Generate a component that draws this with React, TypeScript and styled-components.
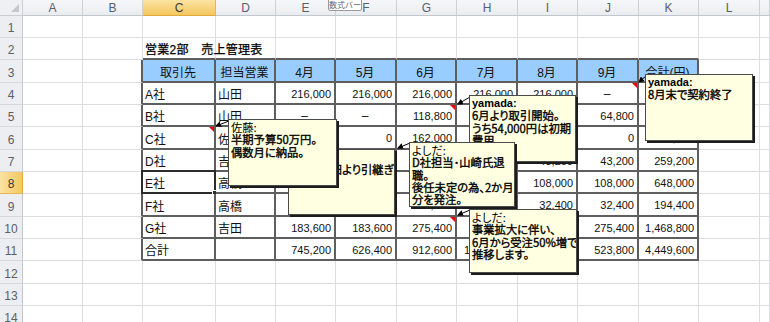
import React from "react";
import styled, { createGlobalStyle, css } from "styled-components";

const GlobalStyle = createGlobalStyle`
  html, body {
    margin: 0;
    padding: 0;
    background: #fff;
  }
  body {
    width: 770px;
    height: 322px;
    overflow: hidden;
  }
`;

// column widths: row header, A..L, rest of the window
const COLS = [23, 60, 60, 73, 60, 60, 61, 60, 61, 60, 61, 60, 61, 10];
const LETTERS = ["A", "B", "C", "D", "E", "F", "G", "H", "I", "J", "K", "L", ""];
const ROWS = [22, 22, 23, 22, 22, 23, 22, 22, 23, 22, 22, 23, 22, 22];

const SEL_ROW = 8;
const SEL_COL = 3;

// table C3:K11
const DATA: string[][] = [
  ["取引先", "担当営業", "4月", "5月", "6月", "7月", "8月", "9月", "合計(円)"],
  ["A社", "山田", "216,000", "216,000", "216,000", "216,000", "216,000", "–", "1,080,000"],
  ["B社", "山田", "–", "–", "118,800", "64,800", "64,800", "64,800", "313,200"],
  ["C社", "佐藤", "162,000", "0", "162,000", "0", "162,000", "0", "486,000"],
  ["D社", "吉田", "43,200", "43,200", "43,200", "43,200", "43,200", "43,200", "259,200"],
  ["E社", "高橋", "108,000", "108,000", "108,000", "108,000", "108,000", "108,000", "648,000"],
  ["F社", "高橋", "32,400", "32,400", "32,400", "32,400", "32,400", "32,400", "194,400"],
  ["G社", "吉田", "183,600", "183,600", "275,400", "275,400", "275,400", "275,400", "1,468,800"],
  ["合計", "", "745,200", "626,400", "912,600", "1,015,200", "1,015,200", "523,800", "4,449,600"],
];

// cells carrying a comment (row-col)
const NOTED = ["4-10", "5-7", "6-3", "7-6", "10-7"];

type Note = {
  x: number;
  y: number;
  w: number;
  h: number;
  z: number;
  author: string;
  bold?: boolean;
  text: string;
};

const NOTES: Note[] = [
  { x: 645, y: 74, w: 108, h: 67, z: 11, author: "yamada:", bold: true, text: "8月末で契約終了" },
  { x: 469, y: 95, w: 107, h: 67, z: 11, author: "yamada:", bold: true, text: "6月より取引開始。\nうち54,000円は初期\n費用" },
  { x: 288, y: 149, w: 107, h: 66, z: 11, author: "高橋:", text: "4月に吉田より引継ぎ" },
  { x: 228, y: 119, w: 109, h: 67, z: 12, author: "佐藤:", text: "半期予算50万円。\n偶数月に納品。" },
  { x: 409, y: 142, w: 106, h: 65, z: 12, author: "よしだ:", text: "D社担当･山崎氏退\n職。\n後任未定の為、2か月\n分を発注。" },
  { x: 469, y: 209, w: 108, h: 64, z: 11, author: "よしだ:", text: "事業拡大に伴い、\n6月から受注50%増で\n推移します。" },
];

// comment connector lines: box corner -> cell corner
const ARROWS = [
  [646, 76, 639, 82],
  [470, 97, 458, 104],
  [229, 121, 216, 126],
  [410, 143, 398, 148],
  [470, 210, 458, 215],
];

const Sheet = styled.div`
  position: relative;
  display: grid;
  grid-template-columns: ${COLS.map((w) => `${w}px`).join(" ")};
  grid-template-rows: 16px ${ROWS.map((h) => `${h}px`).join(" ")};
  width: 770px;
  height: 322px;
  overflow: hidden;
  background: #fff;
  font-family: "Liberation Sans", "Noto Sans CJK JP", sans-serif;
`;

const Corner = styled.div`
  position: relative;
  box-sizing: border-box;
  background: #eef0f3;
  border-right: 1px solid #c9cdd3;
  border-bottom: 1px solid #c9cdd3;

  &::after {
    content: "";
    position: absolute;
    right: 3px;
    bottom: 3px;
    border-left: 8px solid transparent;
    border-bottom: 8px solid #c4c8cd;
  }
`;

const ColHead = styled.div<{ $sel?: boolean }>`
  box-sizing: border-box;
  display: flex;
  align-items: center;
  justify-content: center;
  padding-top: 1px;
  font-size: 12px;
  color: ${(p) => (p.$sel ? "#3a3a3a" : "#5a6068")};
  background: ${(p) =>
    p.$sel
      ? "linear-gradient(#fbe3a2, #f4c75f)"
      : "linear-gradient(#f6f7f9, #eaedf0)"};
  border-right: 1px solid ${(p) => (p.$sel ? "#e7b556" : "#cdd1d6")};
  border-bottom: 1px solid ${(p) => (p.$sel ? "#e2a93d" : "#c2c7ce")};
`;

const RowHead = styled.div<{ $sel?: boolean }>`
  box-sizing: border-box;
  display: flex;
  align-items: flex-end;
  justify-content: center;
  padding-bottom: 2px;
  font-size: 12px;
  color: ${(p) => (p.$sel ? "#3a3a3a" : "#5a6068")};
  background: ${(p) =>
    p.$sel ? "linear-gradient(90deg, #fbe3a2, #f4c75f)" : "#eceef1"};
  border-right: 1px solid ${(p) => (p.$sel ? "#e2a93d" : "#c2c7ce")};
  border-bottom: 1px solid ${(p) => (p.$sel ? "#e7b556" : "#d5d9de")};
`;

type Align = "left" | "center" | "right";

const Cell = styled.div<{
  $rb: boolean;
  $bb: boolean;
  $align: Align;
  $head?: boolean;
  $table?: boolean;
  $num?: boolean;
  $sel?: boolean;
  $note?: boolean;
}>`
  position: relative;
  box-sizing: border-box;
  display: flex;
  align-items: center;
  justify-content: ${(p) =>
    p.$align === "left" ? "flex-start" : p.$align === "right" ? "flex-end" : "center"};
  padding: 1px 3px 0 2px;
  font-size: ${(p) => (p.$num ? "11px" : "12px")};
  color: #111;
  white-space: nowrap;
  background: ${(p) => (p.$head ? "#99ccff" : p.$table ? "#fff" : "transparent")};
  border-right: ${(p) => (p.$rb ? "2px solid #5e5e5e" : "1px solid #dcdee1")};
  border-bottom: ${(p) => (p.$bb ? "2px solid #5e5e5e" : "1px solid #dcdee1")};

  ${(p) =>
    p.$note &&
    css`
      &::after {
        content: "";
        position: absolute;
        top: 0;
        right: 0;
        border-left: 5px solid transparent;
        border-top: 5px solid #e8000b;
      }
    `}

  ${(p) =>
    p.$sel &&
    css`
      &::before {
        content: "";
        position: absolute;
        left: -2px;
        top: -2px;
        right: -2px;
        bottom: -2px;
        border: 2px solid #2b2b2b;
      }
      &::after {
        content: "";
        position: absolute;
        right: -5px;
        bottom: -5px;
        width: 5px;
        height: 5px;
        background: #2b2b2b;
        border: 1px solid #fff;
      }
    `}
`;

const Title = styled.span`
  font-size: 12px;
  color: #000;
  letter-spacing: 0.3px;
  -webkit-text-stroke: 0.25px #000;
`;

const Arrows = styled.svg`
  position: absolute;
  left: 0;
  top: 0;
  z-index: 5;
  pointer-events: none;
`;

const NoteBox = styled.div<{ $x: number; $y: number; $w: number; $h: number; $z: number }>`
  position: absolute;
  left: ${(p) => p.$x}px;
  top: ${(p) => p.$y}px;
  width: ${(p) => p.$w}px;
  height: ${(p) => p.$h}px;
  z-index: ${(p) => p.$z};
  box-sizing: border-box;
  padding: 1px 1px 0 2px;
  overflow: hidden;
  background: #ffffe1;
  border: 1px solid #4a4a4a;
  box-shadow: 2px 2px 0 #1c1c1c;
  font-family: "Noto Sans CJK JP", "Liberation Sans", sans-serif;
  font-feature-settings: "palt";
  font-size: 11.3px;
  line-height: 12.3px;
  color: #000;
  white-space: pre;
`;

const Author = styled.div<{ $bold?: boolean }>`
  font-weight: ${(p) => (p.$bold ? 700 : 400)};
  font-family: ${(p) =>
    p.$bold ? `"Liberation Sans", "Noto Sans CJK JP", sans-serif` : "inherit"};
  font-size: ${(p) => (p.$bold ? "11px" : "inherit")};
`;

const Body = styled.div`
  font-weight: 400;
  -webkit-text-stroke: 0.35px #000;
`;

const Tip = styled.div`
  position: absolute;
  left: 328px;
  top: -2px;
  width: 34px;
  height: 13px;
  z-index: 20;
  box-sizing: border-box;
  display: flex;
  align-items: center;
  justify-content: center;
  background: #fff;
  border: 1px solid #9a9a9a;
  border-radius: 2px;
  font-family: "Noto Sans CJK JP", sans-serif;
  font-size: 8px;
  line-height: 8px;
  color: #666;
`;

function renderCell(r: number, c: number) {
  const inTable = r >= 3 && r <= 11 && c >= 3 && c <= 11;
  const rb = r >= 3 && r <= 11 && c >= 2 && c <= 11;
  const bb = c >= 3 && c <= 11 && r >= 2 && r <= 11;
  let text = "";
  let align: Align = "left";
  let num = false;

  if (inTable) {
    text = DATA[r - 3][c - 3];
    if (r === 3) align = "center";
    else if (c >= 5) {
      if (text === "–") align = "center";
      else {
        align = "right";
        num = true;
      }
    }
  }

  const key = `${r}-${c}`;
  return (
    <Cell
      key={key}
      $rb={rb}
      $bb={bb}
      $align={align}
      $head={inTable && r === 3}
      $table={inTable}
      $num={num}
      $sel={r === SEL_ROW && c === SEL_COL}
      $note={NOTED.includes(key)}
    >
      {r === 2 && c === 3 ? <Title>営業2部　売上管理表</Title> : text}
    </Cell>
  );
}

export default function App() {
  return (
    <>
      <GlobalStyle />
      <Sheet>
        <Corner />
        {LETTERS.map((l, i) => (
          <ColHead key={`h${i}`} $sel={i + 1 === SEL_COL}>
            {l}
          </ColHead>
        ))}
        {ROWS.map((_, ri) => {
          const r = ri + 1;
          return (
            <React.Fragment key={`r${r}`}>
              <RowHead $sel={r === SEL_ROW}>{r}</RowHead>
              {LETTERS.map((_, ci) => renderCell(r, ci + 1))}
            </React.Fragment>
          );
        })}

        <Arrows width={770} height={322}>
          <defs>
            <marker
              id="ah"
              viewBox="0 0 6 6"
              refX="5"
              refY="3"
              markerWidth="6"
              markerHeight="6"
              orient="auto"
            >
              <path d="M0,0 L6,3 L0,6 z" fill="#000" />
            </marker>
          </defs>
          {ARROWS.map(([x1, y1, x2, y2], i) => (
            <line
              key={i}
              x1={x1}
              y1={y1}
              x2={x2}
              y2={y2}
              stroke="#000"
              strokeWidth={1}
              markerEnd="url(#ah)"
            />
          ))}
        </Arrows>

        {NOTES.map((n, i) => (
          <NoteBox key={i} $x={n.x} $y={n.y} $w={n.w} $h={n.h} $z={n.z}>
            <Author $bold={n.bold}>{n.author}</Author>
            <Body>{n.text}</Body>
          </NoteBox>
        ))}

        <Tip>数式バー</Tip>
      </Sheet>
    </>
  );
}
